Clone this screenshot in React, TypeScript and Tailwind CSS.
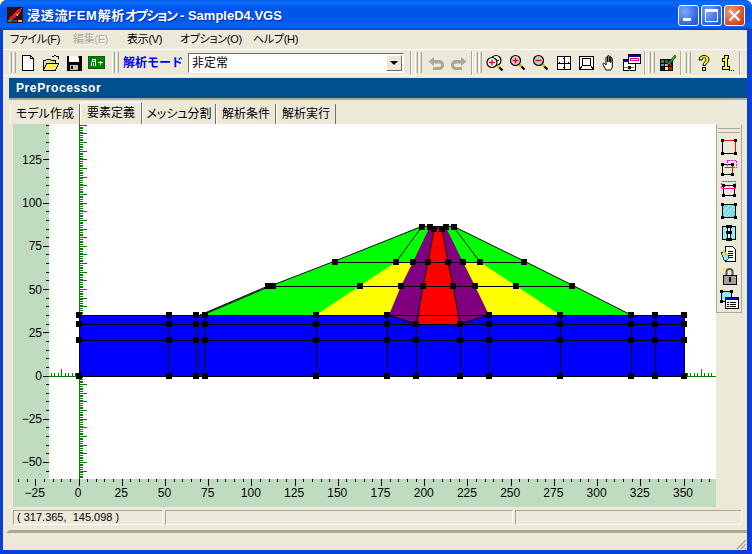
import type { ReactNode } from 'react';

const UI = "font-['Liberation_Sans','Noto_Sans_CJK_JP',sans-serif]";
const X0 = 79;
const Y0 = 376;
const K = 1.7286;

const px = (v: number) => X0 + v * K;
const py = (v: number) => Y0 - v * K;
const range = (from: number, to: number, step: number) => {
  const out: number[] = [];
  for (let v = from; v <= to; v += step) out.push(v);
  return out;
};

const MESH_NODES = [
  [422, 227], [430, 227], [434, 229], [442, 229], [446, 227], [454, 227],
  [335, 262], [396, 262], [413, 262], [428, 262], [448, 262], [463, 262], [480, 262], [524, 262],
  [268, 286], [273, 286], [360, 286], [401, 286], [423, 286], [453, 286], [475, 286], [516, 286], [572, 286],
];
const VERTICALS = [79, 169, 196, 205, 316, 387, 416, 460, 489, 560, 631, 655, 684];

function Chart() {
  const nodes = [...MESH_NODES];
  VERTICALS.forEach(x => {
    const top = x === 416 || x === 460 ? [324, 340, 376] : [315, 324, 340, 376];
    top.forEach(y => nodes.push([x, y]));
  });

  return (
    <svg width="703" height="383" viewBox="13 124 703 383" className={`shrink-0 ${UI}`}>
      <rect x="13" y="124" width="703" height="383" fill="#c0dcc0" />
      <rect x="49" y="124" width="667" height="355" fill="#fff" />

      {range(-35, 365, 5).map(v => (
        <line key={v} x1={px(v)} x2={px(v)} y1="479" y2={v % 25 === 0 ? 486 : 482} stroke="#000" shapeRendering="crispEdges" />
      ))}
      {range(-55, 145, 5).map(v => (
        <line key={v} x1={v % 25 === 0 ? 43 : 46} x2="49" y1={py(v)} y2={py(v)} stroke="#000" shapeRendering="crispEdges" />
      ))}
      {range(-25, 350, 25).map(v => (
        <text key={v} x={px(v) - 1} y="497" textAnchor="middle" fontSize="12" fill="#000">{v < 0 ? `−${-v}` : v}</text>
      ))}
      {range(-50, 125, 25).map(v => (
        <text key={v} x="42" y={py(v) + 4} textAnchor="end" fontSize="12" fill="#000">{v < 0 ? `−${-v}` : v}</text>
      ))}

      <g stroke="#008000" shapeRendering="crispEdges">
        <line x1={X0} x2={X0} y1="124" y2="479" />
        {range(-59, 145, 1).map(v => (
          <line key={v} x1={X0} x2={X0 + (v % 5 === 0 ? 8 : 4)} y1={py(v)} y2={py(v)} />
        ))}
        <line x1="49" x2="716" y1={Y0} y2={Y0} />
        {[...range(-16, 0, 2), ...range(350, 366, 2)].map(v => (
          <line key={v} x1={px(v)} x2={px(v)} y1={Y0} y2={Y0 - (v % 10 === 0 ? 7 : 3)} />
        ))}
      </g>

      <rect x={X0} y="315" width="605" height="61" fill="#00f" />
      <polygon points="200,315 205,313 273,285 335,261.5 421.7,226 453.7,226 524,261 572,285 631,315" fill="#0f0" />
      <polygon points="316,315 396,262 480,262 560,315" fill="#ff0" />
      <polygon points="429.7,227 413,262 401,286 389,315 416,323.7 460,323.7 489,315 475,286 463,262 445.7,227" fill="#800080" />
      <polygon points="434,229 442,229 448,262 453,286 459.5,324 418,324 423,286 428,262" fill="#f00" />

      <g stroke="#000" fill="none">
        <polyline points="205,314 273,285 335,261 421.7,226.5 453.7,226.5 524,261 572,285 631,315" />
        <line x1="200" y1="315" x2="268" y2="286" />
        <line x1="335" y1="262.5" x2="524" y2="262.5" shapeRendering="crispEdges" />
        <line x1="268" y1="286.5" x2="572" y2="286.5" shapeRendering="crispEdges" />
        <line x1="421.7" y1="227" x2="396" y2="262" />
        <line x1="453.7" y1="227" x2="480" y2="262" />
        <polyline points="434,229 428,262 423,286 416,324" />
        <polyline points="442,229 448,262 453,286 460,324" />
        <polyline points="387,315 416,324" />
        <polyline points="460,324 489,315" />
        {[315, 324, 340, 376].map(y => (
          <line key={y} x1={X0} x2="684" y1={y + 0.5} y2={y + 0.5} shapeRendering="crispEdges" />
        ))}
        {VERTICALS.map(x => (
          <line key={x} x1={x + 0.5} x2={x + 0.5} y1={x === 416 || x === 460 ? 324 : 315} y2="376" shapeRendering="crispEdges" />
        ))}
      </g>

      {nodes.map(([x, y], i) => (
        <rect key={i} x={x - 3} y={y - 3} width="6" height="6" fill="#000" shapeRendering="crispEdges" />
      ))}
    </svg>
  );
}

function Ico({ children, size = 18 }: { children: ReactNode; size?: number }) {
  return (
    <svg width={size} height={size} viewBox={`0 0 ${size} ${size}`} shapeRendering="crispEdges" className="shrink-0">
      {children}
    </svg>
  );
}

const NewIcon = () => (
  <Ico><path d="M3.500 1.500h8l3 3v12h-11z" fill="#fff" stroke="#000" /><path d="M11.500 1.500v3h3" fill="none" stroke="#000" /></Ico>
);
const OpenIcon = () => (
  <Ico>
    <path d="M1.500 6.500h2l1-1h4l1 1h4v10h-12z" fill="#e8d890" stroke="#000" />
    <path d="M1.500 16.500l3-7h12l-3 7z" fill="#ffee66" stroke="#000" />
    <path d="M10 3l3-1.500 3 1.500M16 2v3" fill="none" stroke="#000" />
  </Ico>
);
const SaveIcon = () => (
  <Ico>
    <path d="M1.500 1.500h15v15h-15z" fill="#000" />
    <path d="M4 2h10v6H4z" fill="#fff" />
    <path d="M13 2h1v2h-1z" fill="#00a0a0" />
    <path d="M5 11h8v5H5z" fill="#c0c0c0" />
    <path d="M6 12h2v3H6z" fill="#000" />
  </Ico>
);
const RunIcon = () => (
  <svg width="17" height="13" viewBox="0 0 17 13" shapeRendering="crispEdges" className="shrink-0">
    <rect width="17" height="13" fill="#006000" />
    <rect x="1" y="1" width="15" height="11" fill="#008000" />
    <path d="M4 3h3v2H4zM3.500 5.500v4M7.500 5.500v4M5.500 7v3" stroke="#fff" fill="none" />
    <path d="M10 6.500h5M12.500 4.500v4" stroke="#fff" fill="none" />
  </svg>
);
const UndoIcon = ({ flip = false }: { flip?: boolean }) => (
  <Ico>
    <g transform={flip ? 'matrix(-1 0 0 1 18 0)' : undefined} shapeRendering="auto">
      <path d="M7 3L1.500 7.500 7 12V9.500h5c1.500 0 2 .8 2 1.500 0 1-.8 2-2 2H6v3h6.500c2.500 0 4.500-2.200 4.500-5s-2-5-4.500-5H7z" fill="#aca899" />
    </g>
  </Ico>
);
const Lens = ({ cx, cy, sign, fill = '#fff' }: { cx: number; cy: number; sign: '+' | '-'; fill?: string }) => (
  <g shapeRendering="auto">
    <circle cx={cx} cy={cy} r="5" fill={fill} stroke="#000" strokeWidth="1.200" />
    <path d={`M${cx - 3} ${cy}h6`} stroke="#f00" strokeWidth="1.400" />
    {sign === '+' && <path d={`M${cx} ${cy - 3}v6`} stroke="#f00" strokeWidth="1.400" />}
  </g>
);
const Handle = ({ x, y }: { x: number; y: number }) => (
  <g shapeRendering="auto">
    <path d={`M${x} ${y}l5 5`} stroke="#000" strokeWidth="2.200" />
    <path d={`M${x} ${y}l2 2`} stroke="#e8d000" strokeWidth="2.200" />
  </g>
);
const ZoomBoth = () => (
  <Ico>
    <Lens cx={10} cy={6.500} sign="-" />
    <Lens cx={6} cy={8.500} sign="+" />
    <Handle x={11.500} y={11.500} />
  </Ico>
);
const ZoomIn = () => <Ico><Lens cx={6.500} cy={6.500} sign="+" fill="#d8d8d8" /><Handle x={10.500} y={10.500} /></Ico>;
const ZoomOut = () => <Ico><Lens cx={6.500} cy={6.500} sign="-" fill="#c8c8c8" /><Handle x={10.500} y={10.500} /></Ico>;
const FitIcon = () => (
  <Ico>
    <path d="M2.500 2.500h13v13h-13zM9 3v12M3 9h12" fill="#fff" stroke="#000" />
    <path d="M9 3l-1.500 2h3zM9 15l-1.500-2h3zM3 9l2-1.500v3zM15 9l-2-1.500v3z" fill="#000" />
  </Ico>
);
const FrameIcon = () => (
  <Ico>
    <path d="M1.500 2.500h14v13h-14z" fill="#fff" stroke="#000" />
    <path d="M4.500 4.500h8v7h-8zM2 15l2.500-3.500M15 15l-2.500-3.500" fill="none" stroke="#000" />
  </Ico>
);
const HandIcon = () => (
  <Ico>
    <path d="M5 16L2 10.500c-.5-1 .8-1.800 1.500-1L5 11V4c0-1.200 1.500-1.200 1.500 0v4-5.500c0-1.200 1.700-1.200 1.700 0V8 3c0-1.200 1.600-1.200 1.600 0v5.500-4c0-1.200 1.500-1.200 1.500 0V12c0 2-1 3-1.500 4z" fill="#fff" stroke="#000" shapeRendering="auto" />
  </Ico>
);
const PanelIcon = () => (
  <Ico size={20}>
    <path d="M0.500 6.500h12v11h-12z" fill="#fff" stroke="#000" />
    <path d="M1 7h11v2H1z" fill="#0000c0" />
    <path d="M1 14.500h10M6.500 14v4" stroke="#00c000" />
    <path d="M5.500 1.500h12v9h-12z" fill="#fff" stroke="#000" />
    <path d="M6 2h11v2H6z" fill="#0000c0" />
    <path d="M7.500 5.500h8v2h-8z" fill="#fff" stroke="#e0007f" />
    <rect x="5" y="13" width="3" height="3" fill="#000" />
  </Ico>
);
const PaletteIcon = () => (
  <Ico>
    <path d="M1 5h13v12H1z" fill="#000" />
    <path d="M2 6h3v3H2z" fill="#408040" />
    <path d="M6 6h3v3H6z" fill="#804040" />
    <path d="M2 10h3v2H2z" fill="#808080" />
    <path d="M6 10h3v2H6z" fill="#c0c0c0" />
    <path d="M10 10h3v2h-3z" fill="#c00000" />
    <path d="M2 13h3v3H2z" fill="#0000c0" />
    <path d="M6 13h3v3H6z" fill="#ffff00" />
    <path d="M10 13h3v3h-3z" fill="#ff0000" />
    <path d="M8 10L16 1l1 2-7 8z" fill="#00c000" stroke="#000" strokeWidth=".5" shapeRendering="auto" />
  </Ico>
);
const HelpIcon = () => (
  <Ico>
    <path d="M4 6c0-3 2.500-4.500 5-4.500s5 1.500 5 4c0 3-3 3.500-3.500 6H8c0-3 3-4 3-6 0-1-1-1.800-2-1.800S7 4.500 7 6z" fill="#ffff00" stroke="#000" shapeRendering="auto" />
    <rect x="7.500" y="13" width="3" height="3" fill="#ffff00" stroke="#000" />
  </Ico>
);
const InfoIcon = () => (
  <Ico>
    <path d="M5 1.500h4v3H8v8h2v3H3v-3h2v-5H3.500v-3H5z" fill="#ffff00" stroke="#000" />
    <path d="M10 16h1M12 16h1M14 16h1" stroke="#000" />
  </Ico>
);

const Corners = ({ d }: { d: number[][] }) => (
  <>{d.map(([x, y], i) => <rect key={i} x={x} y={y} width="3" height="3" fill="#000" />)}</>
);
const ToolA = () => (
  <Ico><path d="M3.500 2.500h12M15.500 2.500v12" stroke="#f00" /><path d="M2.500 3v12h12" fill="none" stroke="#000" /><Corners d={[[1, 1], [14, 1], [1, 14], [14, 14]]} /></Ico>
);
const ToolB = () => (
  <Ico>
    <path d="M2.500 5.500h10v10h-10z" fill="none" stroke="#000" />
    <path d="M12.500 5.500v8M5 8.500h8" stroke="#f00" />
    <path d="M7.500 1.500h9v7h-9z" fill="none" stroke="#f0f" strokeDasharray="2 1" />
    <Corners d={[[1, 4], [11, 4], [1, 14], [11, 14]]} />
  </Ico>
);
const ToolC = () => (
  <Ico>
    <path d="M3.500 5.500h11v10h-11z" fill="none" stroke="#000" />
    <path d="M4 8.500h10" stroke="#f00" />
    <path d="M1.500 1.500h14v7h-14z" fill="none" stroke="#f0f" strokeDasharray="2 1" />
    <Corners d={[[2, 4], [13, 4], [2, 14], [13, 14]]} />
  </Ico>
);
const ToolD = () => (
  <Ico>
    <path d="M2.500 2.500h13v13h-13z" fill="#66ddee" stroke="#000" />
    <path d="M4 14L14 4M7 15L15 7M3 10l7-7" stroke="#fff" />
    <Corners d={[[1, 1], [14, 1], [1, 14], [14, 14]]} />
  </Ico>
);
const ToolE = () => (
  <Ico>
    <path d="M2.500 2.500h13v13h-13z" fill="#88eeff" stroke="#000" />
    <path d="M7 3h4v12H7z" fill="#fff" />
    <path d="M7.500 3v12M10.500 3v12" stroke="#000" />
    <Corners d={[[6, 1], [9, 1], [6, 7], [9, 7], [6, 14], [9, 14]]} />
  </Ico>
);
const ToolF = () => (
  <Ico>
    <path d="M5.500 1.500h7l3 3v12h-10z" fill="#fff" stroke="#000" />
    <path d="M8 6h5M8 8h5M8 10h5M8 12h5" stroke="#000" />
    <path d="M1 7h4l4 5-2 3H4z" fill="#88eeff" stroke="#000" strokeWidth=".7" />
    <path d="M3 6l5 5" stroke="#e8d000" strokeWidth="2" />
  </Ico>
);
const ToolG = () => (
  <Ico>
    <path d="M6.500 8V4.500c0-3.500 6-3.500 6 0V8" fill="none" stroke="#555" strokeWidth="2" shapeRendering="auto" />
    <path d="M3 8h13v9H3z" fill="#a0a0a0" stroke="#000" />
    <path d="M9 10h2v5H9z" fill="#000" />
    <path d="M1 1l3 3M0 6h3M4 0v3" stroke="#ffee00" />
  </Ico>
);
const ToolH = () => (
  <Ico size={20}>
    <path d="M2.500 2.500h10v10h-10z" fill="#88eeee" stroke="#000" />
    <Corners d={[[1, 1], [11, 1], [1, 11]]} />
    <path d="M6.500 8.500h13v11h-13z" fill="#fff" stroke="#000" />
    <path d="M7 9h12v2H7z" fill="#0000c0" />
    <path d="M8 13.500h2M11 13.500h6M8 15.500h2M11 15.500h6M8 17.500h2M11 17.500h6" stroke="#000" />
  </Ico>
);

function Grip() {
  return (
    <div className="flex h-[21px] w-[7px] shrink-0 gap-px">
      <span className="w-[3px] border-x border-l-white border-r-[#aca899] bg-[#d8d4c4]" />
      <span className="w-[3px] border-x border-l-white border-r-[#aca899] bg-[#d8d4c4]" />
    </div>
  );
}
const Sep = () => <span className="h-[24px] w-[2px] shrink-0 border-x border-l-[#aca899] border-r-white" />;
const Btn = ({ children }: { children: ReactNode }) => (
  <span className="flex h-[22px] w-[23px] shrink-0 items-center justify-center">{children}</span>
);

function CaptionButton({ kind }: { kind: 'min' | 'max' | 'close' }) {
  const bg =
    kind === 'close'
      ? 'bg-[radial-gradient(circle_at_30%_30%,#f0a080,#d84a20_70%,#c03010)]'
      : 'bg-[radial-gradient(circle_at_30%_30%,#7ea8f8,#2f62e0_70%,#2050d0)]';
  return (
    <span className={`flex h-[21px] w-[21px] items-center justify-center rounded-[3px] border border-white ${bg}`}>
      {kind === 'min' && <span className="mt-[8px] mr-[4px] h-[3px] w-[8px] bg-white" />}
      {kind === 'max' && <span className="h-[13px] w-[13px] border border-t-[3px] border-white" />}
      {kind === 'close' && (
        <svg width="13" height="13" viewBox="0 0 13 13"><path d="M1.500 1.500l10 10M11.500 1.500l-10 10" stroke="#fff" strokeWidth="2.200" /></svg>
      )}
    </span>
  );
}

const MENU = [
  { label: 'ファイル(F)', w: 'w-[63px]' },
  { label: '編集(E)', w: 'w-[54px]', off: true },
  { label: '表示(V)', w: 'w-[53px]' },
  { label: 'オプション(O)', w: 'w-[73px]' },
  { label: 'ヘルプ(H)', w: 'w-[60px]' },
];

const TABS = [
  { label: 'モデル作成', w: 'w-[70px]' },
  { label: '要素定義', w: 'w-[62px]', on: true },
  { label: 'メッシュ分割', w: 'w-[74px]' },
  { label: '解析条件', w: 'w-[60px]' },
  { label: '解析実行', w: 'w-[60px]' },
];

const SIDE_TOOLS = [
  { el: <ToolA />, h: 'h-[21px]' },
  { el: <ToolB />, h: 'h-[21px]' },
  { el: <ToolC />, h: 'h-[21px]' },
  { el: <ToolD />, h: 'h-[23px]' },
  { el: <ToolE />, h: 'h-[21px]' },
  { el: <ToolF />, h: 'h-[22px]' },
  { el: <ToolG />, h: 'h-[22px]' },
  { el: <ToolH />, h: 'h-[24px]' },
];

export default function App() {
  return (
    <div className={`flex h-[554px] w-[752px] flex-col overflow-hidden rounded-t-[7px] bg-[#0a3fd8] ${UI}`}>
      <div className="flex h-[30px] shrink-0 items-center bg-[linear-gradient(#0a5fe8_0%,#0a6cff_10%,#0054e8_30%,#0058ee_70%,#0a62f8_88%,#0040c8_100%)] pl-[7px] pr-[7px]">
        <svg width="16" height="16" viewBox="0 0 16 16" shapeRendering="crispEdges" className="shrink-0">
          <rect width="16" height="16" fill="#301010" />
          <path d="M1 12L8 6l3-4 4-1-2 5-5 4-4 4z" fill="#e02020" />
          <path d="M8 8l4-2-1 3z" fill="#ffd000" />
          <path d="M1 13h4v2H1z" fill="#20a020" />
          <path d="M6 13h4v2H6z" fill="#2040e0" />
          <path d="M11 13h4v2h-4z" fill="#f0c000" />
        </svg>
        <span className="mt-[2px] ml-[4px] flex-1 text-[13px] font-bold whitespace-pre text-white [font-feature-settings:'palt'] [text-shadow:1px_1px_0_#0030a0]">
          <span className="tracking-[0.7px]">浸透流FEM解析</span>
          <span className="tracking-[-1.5px]">オプション</span>
          <span> - </span>
          SampleD4.VGS
        </span>
        <div className="flex gap-[2px]">
          <CaptionButton kind="min" />
          <CaptionButton kind="max" />
          <CaptionButton kind="close" />
        </div>
      </div>

      <div className="mr-[5px] mb-[4px] ml-[3px] flex min-h-0 flex-1 flex-col bg-[#ece9d8]">
        <div className="flex h-[19px] shrink-0 items-center pl-[7px] text-[11px] tracking-[-0.3px] [font-feature-settings:'palt'] text-black">
          {MENU.map(m => (
            <span key={m.label} className={`${m.w} ${m.off ? 'text-[#aca899] [text-shadow:1px_1px_0_#fff]' : ''} whitespace-nowrap`}>
              {m.label}
            </span>
          ))}
        </div>

        <div className="flex h-[27px] shrink-0 items-center border-y border-white pl-[6px]">
          <Grip />
          <div className="flex">
            <Btn><NewIcon /></Btn>
            <Btn><OpenIcon /></Btn>
            <Btn><SaveIcon /></Btn>
            <Btn><RunIcon /></Btn>
          </div>
          <span className="w-[4px]" />
          <Grip />
          <span className="ml-[4px] w-[65px] text-[12px] font-bold whitespace-nowrap text-[#0000ff]">解析モード</span>
          <div className="flex h-[20px] w-[216px] items-center justify-between border border-t-[#716f64] border-r-white border-b-white border-l-[#716f64] bg-white pr-px pl-[3px] text-[12px]">
            <span>非定常</span>
            <span className="flex h-[16px] w-[16px] items-center justify-center border border-t-white border-r-[#716f64] border-b-[#716f64] border-l-white bg-[#ece9d8]">
              <span className="h-0 w-0 border-x-[4px] border-t-[4px] border-x-transparent border-t-black" />
            </span>
          </div>
          <span className="w-[6px]" />
          <Sep />
          <span className="w-[3px]" />
          <Grip />
          <div className="ml-[2px] flex"><Btn><UndoIcon /></Btn><Btn><UndoIcon flip /></Btn></div>
          <span className="w-[1px]" />
          <Sep />
          <span className="w-[2px]" />
          <Grip />
          <div className="ml-[1px] flex">
            <Btn><ZoomBoth /></Btn>
            <Btn><ZoomIn /></Btn>
            <Btn><ZoomOut /></Btn>
            <Btn><FitIcon /></Btn>
            <Btn><FrameIcon /></Btn>
            <Btn><HandIcon /></Btn>
            <Btn><PanelIcon /></Btn>
          </div>
          <Sep />
          <span className="w-[2px]" />
          <Grip />
          <div className="ml-[1px] flex"><Btn><PaletteIcon /></Btn></div>
          <span className="w-[1px]" />
          <Sep />
          <span className="w-[2px]" />
          <Grip />
          <div className="ml-[1px] flex gap-px"><Btn><HelpIcon /></Btn><Btn><InfoIcon /></Btn></div>
          <Sep />
        </div>

        <div className="ml-[3px] flex h-[457px] shrink-0 flex-col border-t-2 border-b-[3px] border-l-[3px] border-t-[#ece9d8] border-b-[#aca899] border-l-[#ece9d8]">
          <div className="flex h-[22px] shrink-0 items-center border-b-2 border-b-[#aca899] bg-[#005090] pl-[7px] text-[12px] font-bold tracking-[0.6px] text-white">
            PreProcessor
          </div>
          <div className="flex h-[24px] shrink-0 items-end pl-px text-[12px] [font-feature-settings:'palt']">
            {TABS.map(t => (
              <span
                key={t.label}
                className={`flex ${t.w} items-center justify-center whitespace-nowrap border-r border-r-[#716f64] ${
                  t.on ? 'h-[22px] border-t border-l border-t-white border-l-white bg-[#ece9d8] pb-[2px]' : 'h-[20px] border-l border-l-white'
                }`}
              >
                {t.label}
              </span>
            ))}
          </div>
          <div className="flex h-[383px] shrink-0 pl-[4px]">
            <Chart />
            <div className="flex flex-1 flex-col">
              <div className="flex w-[26px] flex-col items-center border border-t-[#ece9d8] border-r-[#aca899] border-b-[#aca899] border-l-[#aca899] pb-[1px]">
                <div className="mt-[3px] mb-[3px] h-[5px] w-[22px] border-y border-y-[#aca899]" />
                {SIDE_TOOLS.map((t, i) => (
                  <span key={i} className={`flex ${t.h} items-center justify-center`}>{t.el}</span>
                ))}
              </div>
            </div>
          </div>
          <div className="flex h-[18px] shrink-0 items-end gap-[2px] pl-[4px] text-[11px]">
            <span className="flex h-[15px] w-[150px] items-center border border-t-[#aca899] border-r-white border-b-white border-l-[#aca899] pl-[3px] whitespace-pre">( 317.365,  145.098 )</span>
            <span className="h-[15px] w-[348px] border border-t-[#aca899] border-r-white border-b-white border-l-[#aca899]" />
            <span className="h-[15px] w-[227px] border border-t-[#aca899] border-r-white border-b-white border-l-[#aca899]" />
          </div>
        </div>

        <div className="relative min-h-0 flex-1">
          <svg width="12" height="12" viewBox="0 0 12 12" className="absolute right-0 bottom-0">
            <path d="M11 2L2 11M11 6L6 11M11 10L10 11" stroke="#aca899" strokeWidth="1.400" />
          </svg>
        </div>
      </div>
    </div>
  );
}
